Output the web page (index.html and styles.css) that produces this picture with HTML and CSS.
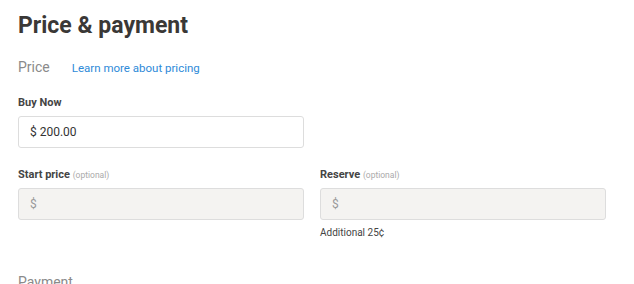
FILE: index.html
```html
<!doctype html>
<html>
    <head>
        <meta charset="UTF-8"/>
        <title>Price &amp; payment</title>
        <link rel="stylesheet" href="styles.css">
    </head>
    <body>
    <div id="page">
        <h1 class="title">Price &amp; payment</h1>
        <div class="section-head">
            <span class="section-name">Price</span>
            <a href="javascript:" class="link">Learn more about pricing</a>
        </div>
        <div class="row">
            <div class="field">
                <label class="label">Buy Now</label>
                <div class="box">$ 200.00</div>
            </div>
        </div>
        <div class="row">
            <div class="field">
                <label class="label">Start price <span class="opt">(optional)</span></label>
                <div class="box empty">$</div>
            </div>
            <div class="field">
                <label class="label">Reserve <span class="opt">(optional)</span></label>
                <div class="box empty">$</div>
                <div class="note">Additional 25¢</div>
            </div>
        </div>
        <div class="section-head payment">
            <span class="section-name">Payment</span>
        </div>
    </div>
    </body>
</html>
```

FILE: styles.css
```css
* {
    margin: 0px;
    padding: 0px;
    box-sizing: border-box;
}
body {
    font-family: "Roboto", "Liberation Sans", sans-serif;
    color: #333;
    background: #fff;
}
#page {
    width: 588px;
    margin-left: 18px;
    padding-top: 11px;
}
.title {
    font-size: 23px;
    font-weight: 700;
    line-height: 30px;
    color: #3a3836;
}
.section-head {
    display: flex;
    align-items: baseline;
    gap: 22px;
    margin-top: 18px;
}
.section-name {
    font-size: 14px;
    color: #8a8a8a;
}
.link {
    font-size: 11.5px;
    color: #2e8ad8;
    text-decoration: none;
}
.row {
    display: flex;
    gap: 16px;
    margin-top: 21px;
}
.row + .row {
    margin-top: 20px;
}
.field {
    width: 286px;
}
.label {
    display: block;
    font-size: 11px;
    font-weight: 700;
    color: #444;
    margin-bottom: 7px;
}
.opt {
    font-size: 8.5px;
    font-weight: 400;
    color: #aaa;
}
.box {
    height: 32px;
    border: 1px solid #ddd;
    border-radius: 3px;
    padding: 0 11px;
    line-height: 30px;
    font-size: 12px;
    color: #333;
}
.box.empty {
    background: #f4f3f1;
    color: #999;
}
.note {
    font-size: 10px;
    color: #444;
    margin-top: 7px;
}
.payment {
    margin-top: 36px;
}
```
